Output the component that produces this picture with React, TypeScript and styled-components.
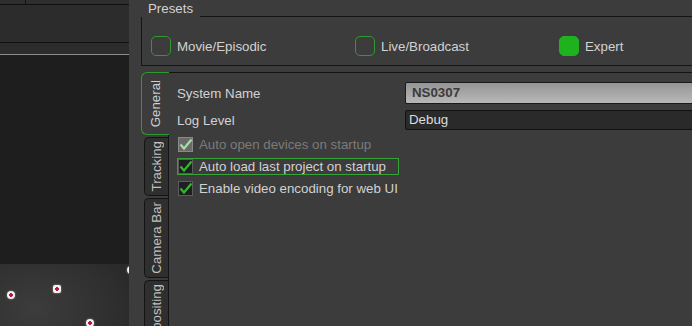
import styled, { createGlobalStyle } from "styled-components";

const GlobalStyle = createGlobalStyle`
  html, body {
    margin: 0;
    padding: 0;
    background: #3c3c3c;
    overflow: hidden;
  }
  body {
    font-family: "Liberation Sans", Arial, sans-serif;
    font-size: 13.3px;
    color: #d0d0d0;
  }
`;

const presets = [
  { name: "Movie/Episodic", on: false },
  { name: "Live/Broadcast", on: false },
  { name: "Expert", on: true }
];

const tabs = [
  { name: "General", active: true },
  { name: "Tracking", active: false },
  { name: "Camera Bar", active: false },
  { name: "Compositing", active: false }
];

const options = [
  { label: "Auto open devices on startup", disabled: true, focused: false },
  { label: "Auto load last project on startup", disabled: false, focused: true },
  { label: "Enable video encoding for web UI", disabled: false, focused: false }
];

const markers = [
  { x: 11, y: 31, square: false },
  { x: 57, y: 25, square: true },
  { x: 90, y: 59, square: false },
  { x: 131, y: 6, square: false }
];

const Check = ({ color }: { color: string }) => (
  <svg width="15" height="15" viewBox="0 0 15 15">
    <path d="M2.5 7.5 L6 11.5 L13.5 2.5" fill="none" stroke={color} strokeWidth="2.2" />
  </svg>
);

const App = () => {
  return (
    <>
      <GlobalStyle />
      <Shell>
        <LeftPane>
          <TopStrip>
            <TabStub />
          </TopStrip>
          <ToolBar />
          <SubBar />
          <DarkArea />
          <Viewport>
            {markers.map((m, i) => (
              <Marker key={i} $square={m.square} style={{ left: m.x - 4, top: m.y - 4 }} />
            ))}
          </Viewport>
        </LeftPane>
        <RightPane>
          <GroupBox>
            <GroupHeader>
              <GroupTitle>Presets</GroupTitle>
              <GroupLine />
            </GroupHeader>
            <GroupBody>
              {presets.map((p) => (
                <PresetOption key={p.name}>
                  <PresetBox $on={p.on} />
                  <span>{p.name}</span>
                </PresetOption>
              ))}
            </GroupBody>
          </GroupBox>
          <TabWidget>
            <TabBar>
              {tabs.map((t) => (
                <Tab key={t.name} $active={t.active}>
                  <TabLabel>{t.name}</TabLabel>
                </Tab>
              ))}
            </TabBar>
            <Pane>
              <FormGrid>
                <FieldLabel>System Name</FieldLabel>
                <NameField>NS0307</NameField>
                <FieldLabel>Log Level</FieldLabel>
                <ComboField>Debug</ComboField>
              </FormGrid>
              <CheckList>
                {options.map((o) => (
                  <CheckRow key={o.label}>
                    <CheckItem $focused={o.focused} $disabled={o.disabled}>
                      <CheckBox $disabled={o.disabled}>
                        <Check color={o.disabled ? "#a9dba9" : "#2fb82f"} />
                      </CheckBox>
                      <span>{o.label}</span>
                    </CheckItem>
                  </CheckRow>
                ))}
              </CheckList>
            </Pane>
          </TabWidget>
        </RightPane>
      </Shell>
    </>
  );
};

export default App;

const Shell = styled.div`
  display: flex;
  width: 740px;
  height: 326px;
  overflow: hidden;
`;

const LeftPane = styled.div`
  width: 129px;
  flex: none;
  display: flex;
  flex-direction: column;
  background: #1e1e1e;
  overflow: hidden;
`;

const TopStrip = styled.div`
  height: 4px;
  background: #2e2e2e;
`;

const TabStub = styled.div`
  width: 25px;
  height: 100%;
  border-right: 1px solid #151515;
`;

const ToolBar = styled.div`
  height: 37px;
  background: #2c2c2c;
  border-top: 1px solid #101010;
  border-bottom: 1px solid #101010;
`;

const SubBar = styled.div`
  height: 11px;
  background: #2c2c2c;
  border-bottom: 1px solid #8e8e8e;
`;

const DarkArea = styled.div`
  flex: 1;
  background: #1e1e1e;
`;

const Viewport = styled.div`
  position: relative;
  height: 62px;
  flex: none;
  background: radial-gradient(ellipse 130px 95px at 35px 45px, #3c3c3c 0%, #303030 55%, #252525 100%);
`;

const Marker = styled.div<{ $square: boolean }>`
  position: absolute;
  width: 8px;
  height: 8px;
  box-sizing: border-box;
  border-radius: ${(p) => (p.$square ? "2px" : "50%")};
  background: radial-gradient(circle, #c2143a 0 1.6px, #f2f2f2 2px);
  box-shadow: 0 0 2px rgba(255, 255, 255, 0.5);
`;

const RightPane = styled.div`
  flex: 1;
  display: flex;
  flex-direction: column;
  padding-left: 12px;
  background: #3c3c3c;
`;

const GroupBox = styled.div`
  display: flex;
  flex-direction: column;
`;

const GroupHeader = styled.div`
  display: flex;
  height: 17px;
`;

const GroupTitle = styled.div`
  width: 59px;
  box-sizing: border-box;
  padding: 1px 0 0 7px;
  color: #d2d2d2;
`;

const GroupLine = styled.div`
  flex: 1;
  border-bottom: 1px solid #151515;
`;

const GroupBody = styled.div`
  box-sizing: border-box;
  height: 49px;
  border: 1px solid #151515;
  border-top: none;
  display: grid;
  grid-template-columns: repeat(3, 204px);
  align-items: start;
  padding: 19px 0 0 9px;
`;

const PresetOption = styled.div`
  display: flex;
  align-items: center;
  gap: 6px;
  height: 20px;
  color: #d2d2d2;
`;

const PresetBox = styled.div<{ $on: boolean }>`
  width: 20px;
  height: 20px;
  box-sizing: border-box;
  border-radius: 5px;
  border: 1.5px solid ${(p) => (p.$on ? "#22b022" : "#2f9a2f")};
  background: ${(p) => (p.$on ? "#1fb21f" : "transparent")};
`;

const TabWidget = styled.div`
  flex: 1;
  display: flex;
  margin-top: 6px;
`;

const TabBar = styled.div`
  width: 27px;
  flex: none;
  display: flex;
  flex-direction: column;
  align-items: flex-end;
  gap: 2px;
`;

const Tab = styled.div<{ $active: boolean }>`
  position: relative;
  z-index: 1;
  box-sizing: border-box;
  width: ${(p) => (p.$active ? "28px" : "24px")};
  margin-right: ${(p) => (p.$active ? "-1px" : "0")};
  padding: ${(p) => (p.$active ? "7px 0" : "3px 0")};
  display: flex;
  justify-content: center;
  border: 1px solid ${(p) => (p.$active ? "#2f9a2f" : "#141414")};
  border-right: none;
  border-radius: ${(p) => (p.$active ? "6px 0 0 6px" : "5px 0 0 5px")};
  background: ${(p) => (p.$active ? "#3c3c3c" : "#2f2f2f")};
  color: ${(p) => (p.$active ? "#d0d0d0" : "#c0c0c0")};
  flex-shrink: 0;
`;

const TabLabel = styled.span`
  writing-mode: vertical-rl;
  transform: rotate(180deg);
  white-space: nowrap;
  line-height: 15px;
`;

const Pane = styled.div`
  flex: 1;
  display: flex;
  flex-direction: column;
  border-top: 1px solid #141414;
  border-left: 1px solid #141414;
  padding: 9px 0 0 8px;
`;

const FormGrid = styled.div`
  display: grid;
  grid-template-columns: 228px 1fr;
  row-gap: 6px;
  align-items: center;
`;

const FieldLabel = styled.div`
  color: #d2d2d2;
`;

const NameField = styled.div`
  height: 22px;
  box-sizing: border-box;
  border: 1px solid #1a1a1a;
  border-radius: 2px;
  background: linear-gradient(#959595, #b8b8b8);
  color: #3b3b3b;
  font-weight: bold;
  line-height: 20px;
  padding-left: 6px;
`;

const ComboField = styled.div`
  height: 20px;
  box-sizing: border-box;
  border: 1px solid #111111;
  border-radius: 2px;
  background: #2a2a2a;
  color: #dcdcdc;
  line-height: 18px;
  padding-left: 3px;
`;

const CheckList = styled.div`
  display: flex;
  flex-direction: column;
  margin-top: 3px;
`;

const CheckRow = styled.div`
  height: 22px;
  display: flex;
  align-items: center;
`;

const CheckItem = styled.div<{ $focused: boolean; $disabled: boolean }>`
  display: inline-flex;
  align-items: center;
  gap: 6px;
  height: 17px;
  box-sizing: border-box;
  padding-right: 12px;
  border: 1px solid ${(p) => (p.$focused ? "#36a336" : "transparent")};
  color: ${(p) => (p.$disabled ? "#7b7b7b" : "#d2d2d2")};
`;

const CheckBox = styled.div<{ $disabled: boolean }>`
  width: 15px;
  height: 15px;
  box-sizing: border-box;
  border: 1px solid ${(p) => (p.$disabled ? "#8a8a8a" : "#5c5c5c")};
  background: ${(p) => (p.$disabled ? "#6a6a6a" : "#1f1f1f")};
  display: flex;
  align-items: center;
  justify-content: center;
  svg {
    flex: none;
  }
`;
